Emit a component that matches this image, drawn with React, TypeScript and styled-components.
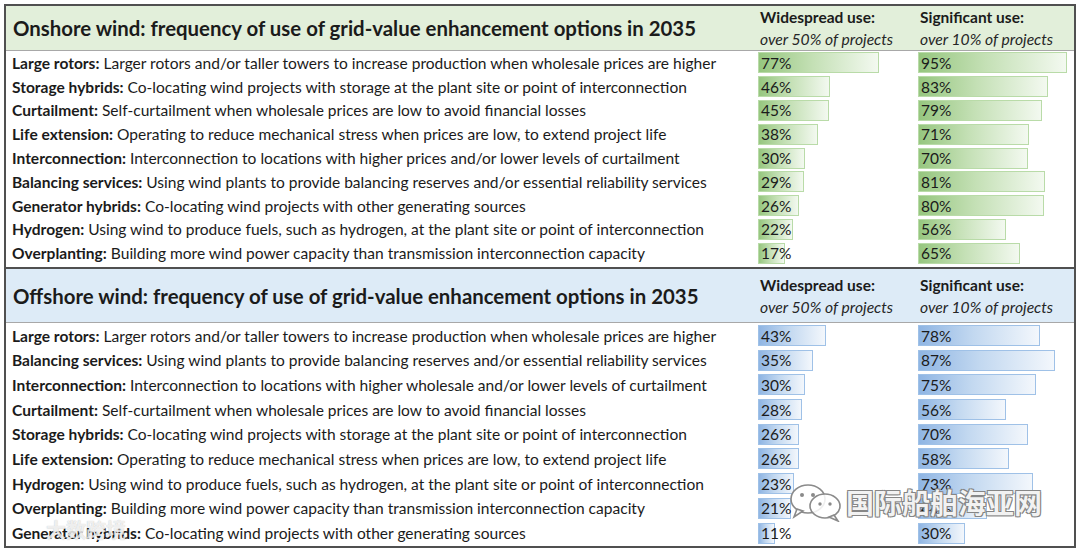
import React from 'react';
import styled, { createGlobalStyle } from 'styled-components';

type Option = {
    name: string;
    text: string;
    wide: number;
    sig: number;
}

type Tone = 'green' | 'blue';

const onshore: Option[] = [
    { name: 'Large rotors:', text: 'Larger rotors and/or taller towers to increase production when wholesale prices are higher', wide: 77, sig: 95 },
    { name: 'Storage hybrids:', text: 'Co-locating wind projects with storage at the plant site or point of interconnection', wide: 46, sig: 83 },
    { name: 'Curtailment:', text: 'Self-curtailment when wholesale prices are low to avoid financial losses', wide: 45, sig: 79 },
    { name: 'Life extension:', text: 'Operating to reduce mechanical stress when prices are low, to extend project life', wide: 38, sig: 71 },
    { name: 'Interconnection:', text: 'Interconnection to locations with higher prices and/or lower levels of curtailment', wide: 30, sig: 70 },
    { name: 'Balancing services:', text: 'Using wind plants to provide balancing reserves and/or essential reliability services', wide: 29, sig: 81 },
    { name: 'Generator hybrids:', text: 'Co-locating wind projects with other generating sources', wide: 26, sig: 80 },
    { name: 'Hydrogen:', text: 'Using wind to produce fuels, such as hydrogen, at the plant site or point of interconnection', wide: 22, sig: 56 },
    { name: 'Overplanting:', text: 'Building more wind power capacity than transmission interconnection capacity', wide: 17, sig: 65 },
];

const offshore: Option[] = [
    { name: 'Large rotors:', text: 'Larger rotors and/or taller towers to increase production when wholesale prices are higher', wide: 43, sig: 78 },
    { name: 'Balancing services:', text: 'Using wind plants to provide balancing reserves and/or essential reliability services', wide: 35, sig: 87 },
    { name: 'Interconnection:', text: 'Interconnection to locations with higher wholesale and/or lower levels of curtailment', wide: 30, sig: 75 },
    { name: 'Curtailment:', text: 'Self-curtailment when wholesale prices are low to avoid financial losses', wide: 28, sig: 56 },
    { name: 'Storage hybrids:', text: 'Co-locating wind projects with storage at the plant site or point of interconnection', wide: 26, sig: 70 },
    { name: 'Life extension:', text: 'Operating to reduce mechanical stress when prices are low, to extend project life', wide: 26, sig: 58 },
    { name: 'Hydrogen:', text: 'Using wind to produce fuels, such as hydrogen, at the plant site or point of interconnection', wide: 23, sig: 73 },
    { name: 'Overplanting:', text: 'Building more wind power capacity than transmission interconnection capacity', wide: 21, sig: 44 },
    { name: 'Generator hybrids:', text: 'Co-locating wind projects with other generating sources', wide: 11, sig: 30 },
];

// px per 100%
const SCALE = 157;

const tones = {
    green: {
        head: '#e2efda',
        bar: 'linear-gradient(90deg, #96c67f 0%, #c4e0b5 45%, #f3f9f0 100%)',
        edge: '#b9dba8',
    },
    blue: {
        head: '#ddebf7',
        bar: 'linear-gradient(90deg, #8fb5e3 0%, #c2d8f0 45%, #f3f7fc 100%)',
        edge: '#9fc1e7',
    },
};

const Section: React.FC<{ title: string; tone: Tone; rows: Option[]; rowH: number; headH: number; last?: boolean }> = (props) => {
    return (
        <StyledSection $last={props.last}>
            <Header $tone={props.tone} $h={props.headH}>
                <Title>{props.title}</Title>
                <ColHead>
                    <b>Widespread use:</b>
                    <i>over 50% of projects</i>
                </ColHead>
                <ColHead>
                    <b>Significant use:</b>
                    <i>over 10% of projects</i>
                </ColHead>
            </Header>
            {props.rows.map((r, i) => (
                <Row key={`${props.tone}${i}`} $h={props.rowH}>
                    <Label><b>{r.name}</b> {r.text}</Label>
                    <Cell>
                        <Bar $tone={props.tone} style={{ width: r.wide * SCALE / 100 }}>
                            <Pct>{r.wide}%</Pct>
                        </Bar>
                    </Cell>
                    <Cell>
                        <Bar $tone={props.tone} style={{ width: r.sig * SCALE / 100 }}>
                            <Pct>{r.sig}%</Pct>
                        </Bar>
                    </Cell>
                </Row>
            ))}
        </StyledSection>
    );
};

const WeChatIcon = () => (
    <svg width="58" height="40" viewBox="0 0 58 40">
        <g fill="rgba(255,255,255,0.85)" stroke="#8a8a8a" strokeWidth="1.6">
            <ellipse cx="20" cy="17" rx="17" ry="14" />
            <path d="M9 27 L6 35 L15 29 Z" />
            <ellipse cx="37" cy="24" rx="15" ry="12" />
            <path d="M46 33 L50 39 L41 35 Z" />
        </g>
        <g fill="#8a8a8a">
            <circle cx="14" cy="13" r="2" />
            <circle cx="25" cy="13" r="2" />
            <circle cx="32" cy="22" r="1.7" />
            <circle cx="42" cy="22" r="1.7" />
        </g>
    </svg>
);

const App: React.FC = () => {
    return (
        <>
            <GlobalStyle />
            <Frame>
                <Section title="Onshore wind: frequency of use of grid-value enhancement options in 2035" tone="green" rows={onshore} rowH={23.8} headH={44} />
                <Section title="Offshore wind: frequency of use of grid-value enhancement options in 2035" tone="blue" rows={offshore} rowH={24.7} headH={53} last />
                <Watermark>
                    <WeChatIcon />
                    <span>国际船舶海亚网</span>
                </Watermark>
                <CornerMark>大数跨境</CornerMark>
            </Frame>
        </>
    );
};

export default App;

const GlobalStyle = createGlobalStyle`
body{
    margin: 0;
    background: #fff;
    font-family: Lato, "Noto Sans", sans-serif;
    color: #1b1b1b;
}
`;

const Frame = styled.div`
position: relative;
box-sizing: border-box;
width: 1072px;
margin: 4px 0 0 4px;
border: 2px solid #505050;
background: #fff;
overflow: hidden;
`;

const StyledSection = styled.section<{ $last?: boolean }>`
padding-bottom: ${p => p.$last ? '1px' : '2px'};
border-bottom: ${p => p.$last ? 'none' : '2px solid #505050'};
`;

const Header = styled.div<{ $tone: Tone; $h: number }>`
display: grid;
grid-template-columns: 752px 160px 1fr;
align-items: center;
height: ${p => p.$h}px;
background: ${p => tones[p.$tone].head};
border-bottom: 1px solid #a8a8a8;
`;

const Title = styled.div`
padding-left: 7px;
font-size: 20.4px;
font-weight: 700;
`;

const ColHead = styled.div`
display: flex;
flex-direction: column;
padding-left: 2px;
font-size: 15.5px;
line-height: 22px;
b{
    font-weight: 700;
}
i{
    font-style: italic;
    font-size: 15.7px;
    color: #262626;
}
`;

const Row = styled.div<{ $h: number }>`
display: grid;
grid-template-columns: 752px 160px 1fr;
align-items: center;
height: ${p => p.$h}px;
`;

const Label = styled.div`
padding-left: 6px;
font-size: 15.55px;
white-space: nowrap;
b{
    font-weight: 700;
}
`;

const Cell = styled.div`
display: flex;
align-items: center;
height: 100%;
`;

const Bar = styled.div<{ $tone: Tone }>`
box-sizing: border-box;
height: 21px;
background: ${p => tones[p.$tone].bar};
border: 1px solid ${p => tones[p.$tone].edge};
display: flex;
align-items: center;
overflow: visible;
white-space: nowrap;
`;

const Pct = styled.span`
padding-left: 2px;
font-size: 15.5px;
color: #1b1b1b;
`;

const Watermark = styled.div`
position: absolute;
left: 782px;
top: 476px;
display: flex;
align-items: center;
gap: 0;
font-family: "Noto Sans CJK SC", sans-serif;
font-size: 28px;
font-weight: 700;
color: rgba(255, 255, 255, 0.92);
text-shadow: 0 0 1px #777, 1px 1px 0 #888, -1px -1px 0 #888, 1px -1px 0 #888, -1px 1px 0 #888;
pointer-events: none;
`;

const CornerMark = styled.div`
position: absolute;
left: 40px;
top: 512px;
font-family: "Noto Sans CJK SC", sans-serif;
font-size: 20px;
line-height: 24px;
font-weight: 700;
color: rgba(255, 255, 255, 0.75);
text-shadow: 0 0 1px rgba(120,120,120,0.5);
pointer-events: none;
`;
